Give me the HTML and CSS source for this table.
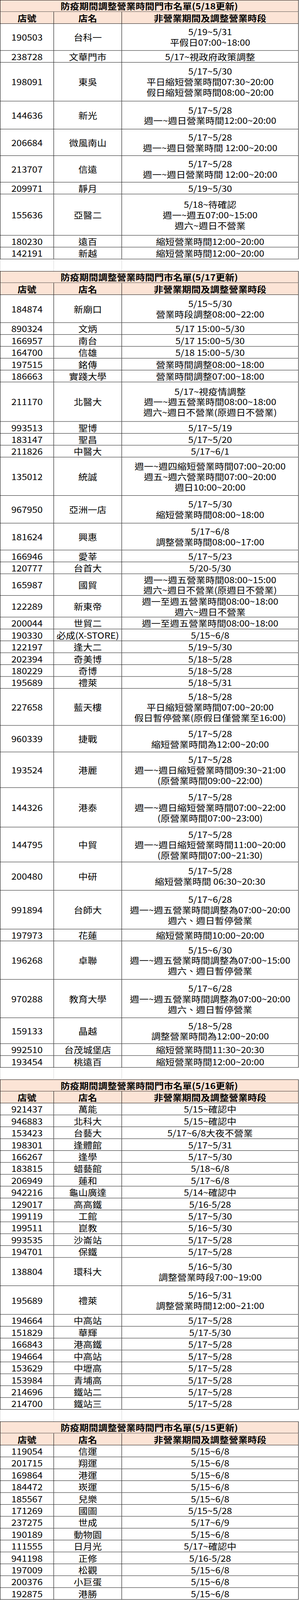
FILE: index.html
```html
<!DOCTYPE html>
<html lang="zh-Hant">
<head>
<meta charset="utf-8">
<title>防疫期間調整營業時間門市名單</title>
<link rel="stylesheet" href="styles.css">
</head>
<body>
<div class="page">
<div class="sheet">

<div class="title">防疫期間調整營業時間門市名單(5/18更新)</div>
<div class="row head"><div class="cell">店號</div><div class="cell">店名</div><div class="cell">非營業期間及調整營業時段</div></div>
<div class="row h77"><div class="cell">190503</div><div class="cell">台科一</div><div class="cell"><span>5/19~5/31</span><span>平假日07:00~18:00</span></div></div>
<div class="row"><div class="cell">238728</div><div class="cell">文華門市</div><div class="cell">5/17~視政府政策調整</div></div>
<div class="row h111"><div class="cell">198091</div><div class="cell">東吳</div><div class="cell"><span>5/17~5/30</span><span>平日縮短營業時間07:30~20:00</span><span>假日縮短營業時間08:00~20:00</span></div></div>
<div class="row h80"><div class="cell">144636</div><div class="cell">新光</div><div class="cell"><span>5/17~5/28</span><span>週一~週日營業時間12:00~20:00</span></div></div>
<div class="row h76"><div class="cell">206684</div><div class="cell">微風南山</div><div class="cell"><span>5/17~5/28</span><span>週一~週日營業時間 12:00~20:00</span></div></div>
<div class="row h76"><div class="cell">213707</div><div class="cell">信遠</div><div class="cell"><span>5/17~5/28</span><span>週一~週日營業時間 12:00~20:00</span></div></div>
<div class="row"><div class="cell">209971</div><div class="cell">靜月</div><div class="cell">5/19~5/30</div></div>
<div class="row h118"><div class="cell">155636</div><div class="cell">亞醫二</div><div class="cell"><span>5/18~待確認</span><span>週一~週五07:00~15:00</span><span>週六~週日不營業</span></div></div>
<div class="row"><div class="cell">180230</div><div class="cell">遠百</div><div class="cell">縮短營業時間12:00~20:00</div></div>
<div class="row"><div class="cell">142191</div><div class="cell">新越</div><div class="cell">縮短營業時間12:00~20:00</div></div>
<div class="row gap"><div class="cell"></div><div class="cell"></div><div class="cell"></div></div>

<div class="title">防疫期間調整營業時間門市名單(5/17更新)</div>
<div class="row head"><div class="cell">店號</div><div class="cell">店名</div><div class="cell">非營業期間及調整營業時段</div></div>
<div class="row h80"><div class="cell">184874</div><div class="cell">新廟口</div><div class="cell"><span>5/15~5/30</span><span>營業時段調整08:00~22:00</span></div></div>
<div class="row"><div class="cell">890324</div><div class="cell">文炳</div><div class="cell">5/17 15:00~5/30</div></div>
<div class="row"><div class="cell">166957</div><div class="cell">南台</div><div class="cell">5/17 15:00~5/30</div></div>
<div class="row"><div class="cell">164700</div><div class="cell">信雄</div><div class="cell">5/18 15:00~5/30</div></div>
<div class="row"><div class="cell">197515</div><div class="cell">銘傳</div><div class="cell">營業時間調整08:00~18:00</div></div>
<div class="row"><div class="cell">186663</div><div class="cell">實踐大學</div><div class="cell">營業時間調整07:00~18:00</div></div>
<div class="row h113"><div class="cell">211170</div><div class="cell">北醫大</div><div class="cell"><span>5/17~視疫情調整</span><span>週一~週五營業時間08:00~18:00</span><span>週六~週日不營業(原週日不營業)</span></div></div>
<div class="row"><div class="cell">993513</div><div class="cell">聖博</div><div class="cell">5/17~5/19</div></div>
<div class="row"><div class="cell">183147</div><div class="cell">聖昌</div><div class="cell">5/17~5/20</div></div>
<div class="row"><div class="cell">211826</div><div class="cell">中醫大</div><div class="cell">5/17~6/1</div></div>
<div class="row h110"><div class="cell">135012</div><div class="cell">統誠</div><div class="cell"><span>週一~週四縮短營業時間07:00~20:00</span><span>週五~週六營業時間07:00~20:00</span><span>週日10:00~20:00</span></div></div>
<div class="row h79"><div class="cell">967950</div><div class="cell">亞洲一店</div><div class="cell"><span>5/17~5/30</span><span>縮短營業時間08:00~18:00</span></div></div>
<div class="row h77"><div class="cell">181624</div><div class="cell">興惠</div><div class="cell"><span>5/17~6/8</span><span>調整營業時間08:00~17:00</span></div></div>
<div class="row"><div class="cell">166946</div><div class="cell">愛莘</div><div class="cell">5/17~5/23</div></div>
<div class="row"><div class="cell">120777</div><div class="cell">台首大</div><div class="cell">5/20-5/30</div></div>
<div class="row h62"><div class="cell">165987</div><div class="cell">國貿</div><div class="cell"><span>週一~週五營業時間08:00~15:00</span><span>週六~週日不營業(原週日不營業)</span></div></div>
<div class="row h62"><div class="cell">122289</div><div class="cell">新東帝</div><div class="cell"><span>週一至週五營業時間08:00~18:00</span><span>週六~週日不營業</span></div></div>
<div class="row"><div class="cell">200044</div><div class="cell">世貿二</div><div class="cell">週一至週五營業時間08:00~18:00</div></div>
<div class="row"><div class="cell">190330</div><div class="cell">必成(X-STORE)</div><div class="cell">5/15~6/8</div></div>
<div class="row"><div class="cell">122197</div><div class="cell">逢大二</div><div class="cell">5/19~5/30</div></div>
<div class="row"><div class="cell">202394</div><div class="cell">奇美博</div><div class="cell">5/18~5/28</div></div>
<div class="row"><div class="cell">180229</div><div class="cell">奇博</div><div class="cell">5/18~5/28</div></div>
<div class="row"><div class="cell">195689</div><div class="cell">禮萊</div><div class="cell">5/18~5/31</div></div>
<div class="row h106"><div class="cell">227658</div><div class="cell">藍天樓</div><div class="cell"><span>5/18~5/28</span><span>平日縮短營業時間07:00~20:00</span><span>假日暫停營業(原假日僅營業至16:00)</span></div></div>
<div class="row h76"><div class="cell">960339</div><div class="cell">捷戰</div><div class="cell"><span>5/17~5/28</span><span>縮短營業時間為12:00~20:00</span></div></div>
<div class="row h102"><div class="cell">193524</div><div class="cell">港麗</div><div class="cell"><span>5/17~5/28</span><span>週一~週日縮短營業時間09:30~21:00</span><span>(原營業時間09:00~22:00)</span></div></div>
<div class="row h113"><div class="cell">144326</div><div class="cell">港泰</div><div class="cell"><span>5/17~5/28</span><span>週一~週日縮短營業時間07:00~22:00</span><span>(原營業時間07:00~23:00)</span></div></div>
<div class="row h100"><div class="cell">144795</div><div class="cell">中貿</div><div class="cell"><span>5/17~5/28</span><span>週一~週日縮短營業時間11:00~20:00</span><span>(原營業時間07:00~21:30)</span></div></div>
<div class="row h81"><div class="cell">200480</div><div class="cell">中研</div><div class="cell"><span>5/17~5/28</span><span>縮短營業時間 06:30~20:30</span></div></div>
<div class="row h111"><div class="cell">991894</div><div class="cell">台師大</div><div class="cell"><span>5/17~6/28</span><span>週一~週五營業時間調整為07:00~20:00</span><span>週六、週日暫停營業</span></div></div>
<div class="row"><div class="cell">197973</div><div class="cell">花蓮</div><div class="cell">縮短營業時間10:00~20:00</div></div>
<div class="row h110"><div class="cell">196268</div><div class="cell">卓聯</div><div class="cell"><span>5/15~6/30</span><span>週一~週五營業時間調整為07:00~15:00</span><span>週六、週日暫停營業</span></div></div>
<div class="row h110"><div class="cell">970288</div><div class="cell">教育大學</div><div class="cell"><span>5/17~6/28</span><span>週一~週五營業時間調整為07:00~20:00</span><span>週六、週日暫停營業</span></div></div>
<div class="row h74"><div class="cell">159133</div><div class="cell">晶越</div><div class="cell"><span>5/18~5/28</span><span>調整營業時間為12:00~20:00</span></div></div>
<div class="row"><div class="cell">992510</div><div class="cell">台茂城堡店</div><div class="cell">縮短營業時間11:30~20:30</div></div>
<div class="row"><div class="cell">193454</div><div class="cell">桃遠百</div><div class="cell">縮短營業時間12:00~20:00</div></div>
<div class="row gap"><div class="cell"></div><div class="cell"></div><div class="cell"></div></div>

<div class="title">防疫期間調整營業時間門市名單(5/16更新)</div>
<div class="row head"><div class="cell">店號</div><div class="cell">店名</div><div class="cell">非營業期間及調整營業時段</div></div>
<div class="row"><div class="cell">921437</div><div class="cell">萬能</div><div class="cell">5/15~確認中</div></div>
<div class="row"><div class="cell">946883</div><div class="cell">北科大</div><div class="cell">5/15~確認中</div></div>
<div class="row"><div class="cell">153423</div><div class="cell">台藝大</div><div class="cell">5/17~6/8大夜不營業</div></div>
<div class="row"><div class="cell">198301</div><div class="cell">逢體館</div><div class="cell">5/17~5/31</div></div>
<div class="row"><div class="cell">166267</div><div class="cell">逢學</div><div class="cell">5/17~5/30</div></div>
<div class="row"><div class="cell">183815</div><div class="cell">蜡藝館</div><div class="cell">5/18~6/8</div></div>
<div class="row"><div class="cell">206949</div><div class="cell">蓮和</div><div class="cell">5/17~6/8</div></div>
<div class="row"><div class="cell">942216</div><div class="cell">龜山廣達</div><div class="cell">5/14~確認中</div></div>
<div class="row"><div class="cell">129017</div><div class="cell">高高鐵</div><div class="cell">5/16-5/28</div></div>
<div class="row"><div class="cell">199119</div><div class="cell">工館</div><div class="cell">5/17~5/30</div></div>
<div class="row"><div class="cell">199511</div><div class="cell">崑教</div><div class="cell">5/16~5/30</div></div>
<div class="row"><div class="cell">993535</div><div class="cell">沙崙站</div><div class="cell">5/17~5/28</div></div>
<div class="row"><div class="cell">194701</div><div class="cell">保鐵</div><div class="cell">5/17~5/28</div></div>
<div class="row h81"><div class="cell">138804</div><div class="cell">環科大</div><div class="cell"><span>5/16~5/30</span><span>調整營業時段7:00~19:00</span></div></div>
<div class="row h82"><div class="cell">195689</div><div class="cell">禮萊</div><div class="cell"><span>5/16~5/31</span><span>調整營業時間12:00~21:00</span></div></div>
<div class="row"><div class="cell">194664</div><div class="cell">中高站</div><div class="cell">5/17~5/28</div></div>
<div class="row"><div class="cell">151829</div><div class="cell">華輝</div><div class="cell">5/17-5/30</div></div>
<div class="row"><div class="cell">166843</div><div class="cell">港高鐵</div><div class="cell">5/17~5/28</div></div>
<div class="row"><div class="cell">194664</div><div class="cell">中高站</div><div class="cell">5/17~5/28</div></div>
<div class="row"><div class="cell">153629</div><div class="cell">中壢高</div><div class="cell">5/17~5/28</div></div>
<div class="row"><div class="cell">153984</div><div class="cell">青埔高</div><div class="cell">5/17~5/28</div></div>
<div class="row"><div class="cell">214696</div><div class="cell">鐵站二</div><div class="cell">5/17~5/28</div></div>
<div class="row"><div class="cell">214700</div><div class="cell">鐵站三</div><div class="cell">5/17~5/28</div></div>
<div class="row gap"><div class="cell"></div><div class="cell"></div><div class="cell"></div></div>

<div class="title">防疫期間調整營業時間門市名單(5/15更新)</div>
<div class="row head"><div class="cell">店號</div><div class="cell">店名</div><div class="cell">非營業期間及調整營業時段</div></div>
<div class="row"><div class="cell">119054</div><div class="cell">信運</div><div class="cell">5/15~6/8</div></div>
<div class="row"><div class="cell">201715</div><div class="cell">翔運</div><div class="cell">5/15~6/8</div></div>
<div class="row"><div class="cell">169864</div><div class="cell">港運</div><div class="cell">5/15~6/8</div></div>
<div class="row"><div class="cell">184472</div><div class="cell">崁運</div><div class="cell">5/15~6/8</div></div>
<div class="row"><div class="cell">185567</div><div class="cell">兒樂</div><div class="cell">5/15~6/8</div></div>
<div class="row"><div class="cell">171269</div><div class="cell">國圖</div><div class="cell">5/15~5/28</div></div>
<div class="row"><div class="cell">237275</div><div class="cell">世成</div><div class="cell">5/17~6/9</div></div>
<div class="row"><div class="cell">190189</div><div class="cell">動物園</div><div class="cell">5/15~6/8</div></div>
<div class="row"><div class="cell">111555</div><div class="cell">日月光</div><div class="cell">5/17~確認中</div></div>
<div class="row"><div class="cell">941198</div><div class="cell">正修</div><div class="cell">5/16-5/28</div></div>
<div class="row"><div class="cell">197009</div><div class="cell">松觀</div><div class="cell">5/15~6/8</div></div>
<div class="row"><div class="cell">200376</div><div class="cell">小巨蛋</div><div class="cell">5/15~6/8</div></div>
<div class="row"><div class="cell">192875</div><div class="cell">港勝</div><div class="cell">5/15~6/8</div></div>

</div>
</div>
</body>
</html>
```

FILE: styles.css
```css
html, body {
  margin: 0;
  padding: 0;
  background: #ffffff;
  overflow: hidden;
}

body {
  font-family: "Noto Sans CJK TC", "Noto Sans CJK JP", "Noto Sans", sans-serif;
  font-size: 24px;
  line-height: 30px;
  color: #000000;
}

/* The window actually captured is 4096px tall; the sheet is drawn at its
   reference size (4580px) and fitted vertically into the captured frame. */
.page {
  width: 765px;
  height: 4096px;
  overflow: hidden;
}

.sheet {
  width: 764px;
  transform: scaleY(0.89432);
  transform-origin: 0 0;
}

.title {
  box-sizing: border-box;
  height: 34px;
  border: 1px solid #000000;
  background: #fce4d6;
  font-weight: 700;
  display: flex;
  align-items: center;
  justify-content: center;
  white-space: nowrap;
}

.row {
  box-sizing: border-box;
  display: grid;
  grid-template-columns: 137px 174px 452px;
  height: 34px;
  border-left: 1px solid #000000;
  border-bottom: 1px solid #000000;
}

.cell {
  box-sizing: border-box;
  border-right: 1px solid #000000;
  display: flex;
  flex-direction: column;
  align-items: center;
  justify-content: center;
  text-align: center;
  white-space: nowrap;
}

.head {
  background: #fce4d6;
  font-weight: 700;
}

.gap {
  border-bottom: none;
  border-left-color: #d4d4d4;
}

.gap .cell {
  border-right-color: #d4d4d4;
}

.gap .cell:last-child {
  border-right: none;
}

.h62 { height: 62px; }
.h74 { height: 74px; }
.h76 { height: 76px; }
.h77 { height: 77px; }
.h79 { height: 79px; }
.h80 { height: 80px; }
.h81 { height: 81px; }
.h82 { height: 82px; }
.h100 { height: 100px; }
.h102 { height: 102px; }
.h106 { height: 106px; }
.h110 { height: 110px; }
.h111 { height: 111px; }
.h113 { height: 113px; }
.h118 { height: 118px; }
```
